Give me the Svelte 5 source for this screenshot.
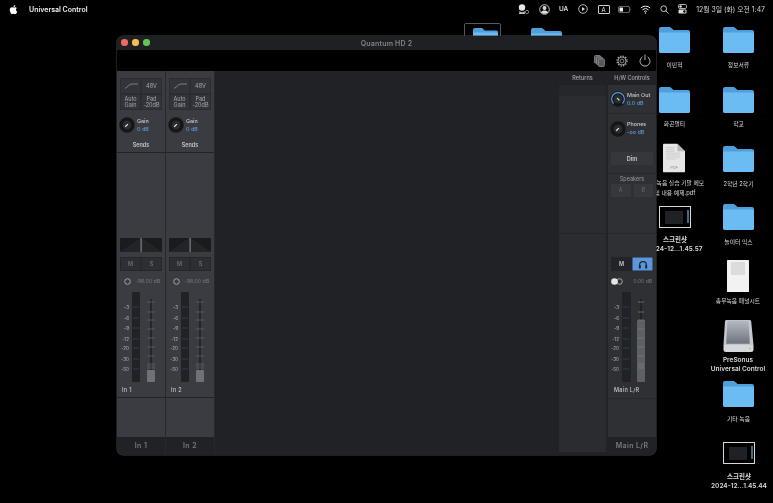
<script>
  const strips = [{ name: 'In 1' }, { name: 'In 2' }];
  const scale = [['-3', 15], ['-6', 26], ['-9', 36], ['-12', 47], ['-20', 56], ['-30', 67], ['-50', 77]];
  const ticks = [10, 20, 28, 37, 46, 55, 64, 72, 74, 76];

  const folders = [
    { x: 659, y: 27, label: '이민혁', ly: 60 },
    { x: 723, y: 27, label: '정보서류', ly: 60 },
    { x: 659, y: 87, label: '화곤멀티', ly: 119 },
    { x: 723, y: 87, label: '학교', ly: 119 },
    { x: 723, y: 146, label: '2학년 2학기', ly: 179 },
    { x: 723, y: 204, label: '놀이터 믹스', ly: 237 },
    { x: 723, y: 381, label: '기타 녹음', ly: 414 }
  ];
  const shots = [
    { x: 659, y: 206, cx: 675, lines: ['스크린샷', '2024-12...1.45.57'], ly: 236 },
    { x: 723, y: 442, cx: 739, lines: ['스크린샷', '2024-12...1.45.44'], ly: 473 }
  ];
</script>

{#snippet folder(w, h)}
  <svg width={w} height={h} viewBox="0 0 31 26">
    <path d="M2 0h8c1.5 0 2 .6 3 1.6L14.5 3H29a2 2 0 0 1 2 2v19a2 2 0 0 1-2 2H2a2 2 0 0 1-2-2V2a2 2 0 0 1 2-2z" fill="#4f9fdc" />
    <path d="M0 5.5h29a2 2 0 0 1 2 2V24a2 2 0 0 1-2 2H2a2 2 0 0 1-2-2z" fill="#6cbcf4" />
  </svg>
{/snippet}

{#snippet knob(blue)}
  <svg class="knob" width="16" height="16" viewBox="0 0 18 18">
    <circle cx="9" cy="9" r="8.7" fill="#161719" />
    <circle cx="9" cy="9" r="5.6" fill="#2b2c2f" stroke="#0e0e10" stroke-width="0.8" />
    {#if blue}
      <path d="M4 14.2A7.2 7.2 0 1 1 14 14.2" fill="none" stroke="#5a9be0" stroke-width="1.3" />
      <path d="M8 8l2.6 2.6" stroke="#e8e8e8" stroke-width="1.2" />
    {:else}
      <path d="M7 11l3-3" stroke="#e8e8e8" stroke-width="1.3" />
    {/if}
  </svg>
{/snippet}

{#snippet meter(capTop, wide)}
  <svg class="meter" width="48" height="90" viewBox="0 0 48 90">
    <rect x={wide ? 14 : 15} y="0" width={wide ? 9 : 8} height="90" rx="1" fill="#212225" />
    <path d="M{wide ? 33 : 34} 7v75" stroke="#1c1d20" stroke-width="1.4" />
    <rect x={wide ? 29 : 30} y={capTop} width="8" height={90 - capTop} rx="1" fill={wide ? '#5d6064' : '#6e7175'} />
    {#each ticks as t}
      <path d="M{wide ? 30 : 30} {t}h{wide ? 6 : 8}" stroke={wide ? '#7b7e82' : '#65686c'} stroke-width="0.7" />
    {/each}
    {#each scale as [label, y]}
      <text x={wide ? 11 : 12} y={y + 2} text-anchor="end">{label}</text>
      <path d="M{wide ? 15 : 16} {y}h6" stroke="#2c4a63" stroke-width="0.8" />
    {/each}
  </svg>
{/snippet}

<div class="desktop">
  <header class="menubar">
    <div class="menu-left">
      <svg width="11" height="11" viewBox="0 0 24 24" fill="#fff">
        <path d="M18.71 19.5c-.83 1.24-1.71 2.45-3.05 2.47-1.34.03-1.77-.79-3.29-.79-1.53 0-2 .77-3.27.82-1.31.05-2.3-1.32-3.14-2.53C4.25 17 2.94 12.45 4.7 9.39c.87-1.52 2.43-2.48 4.12-2.51 1.28-.02 2.5.87 3.29.87.78 0 2.26-1.07 3.81-.91.65.03 2.47.26 3.64 1.98-.09.06-2.17 1.28-2.15 3.81.03 3.02 2.65 4.03 2.68 4.04-.03.07-.42 1.44-1.38 2.83M13 3.5c.73-.83 1.94-1.46 2.94-1.5.13 1.17-.34 2.35-1.04 3.19-.69.85-1.83 1.51-2.95 1.42-.15-1.15.41-2.35 1.05-3.11z" />
      </svg>
      <span class="app-name">Universal Control</span>
    </div>
    <div class="status">
      <svg width="12" height="10" viewBox="0 0 12 10"><circle cx="4" cy="3.5" r="3.2" fill="#e8e8e8" /><path d="M1.5 7c1.5 1.6 3.5 1.6 5 0l.5 3H1z" fill="#bbb" /><circle cx="9" cy="8" r="1.7" fill="none" stroke="#999" stroke-width="0.8" /></svg>
      <svg width="11" height="11" viewBox="0 0 11 11"><circle cx="5.5" cy="5.5" r="4.8" fill="none" stroke="#ddd" stroke-width="0.9" /><circle cx="5.5" cy="4" r="1.9" fill="#ddd" /><path d="M2 8.5c1-2.6 6-2.6 7 0-2 1.8-5 1.8-7 0z" fill="#ddd" /></svg>
      <span class="st-text">UA</span>
      <svg width="10" height="10" viewBox="0 0 10 10"><circle cx="5" cy="5" r="4.3" fill="none" stroke="#ddd" stroke-width="0.8" /><path d="M4 3l3 2-3 2z" fill="#ddd" /></svg>
      <span class="input-box">A</span>
      <svg width="14" height="7" viewBox="0 0 14 7"><rect x="0.4" y="0.4" width="11.2" height="6.2" rx="1.6" fill="none" stroke="#8a8a8a" stroke-width="0.8" /><rect x="1.5" y="1.5" width="3.5" height="4" rx="0.6" fill="#eee" /><path d="M12.6 2.5v2c.7-.2.7-1.8 0-2z" fill="#8a8a8a" /></svg>
      <svg width="11" height="9" viewBox="0 0 11 9" fill="none" stroke="#eee"><path d="M.8 3a6.8 6.8 0 0 1 9.4 0" stroke-width="1" /><path d="M2.5 4.8a4.4 4.4 0 0 1 6 0" stroke-width="1" /><path d="M4.2 6.5a2 2 0 0 1 2.6 0" stroke-width="1" /><circle cx="5.5" cy="8" r=".7" fill="#eee" stroke="none" /></svg>
      <svg width="9" height="9" viewBox="0 0 9 9" fill="none" stroke="#ddd" stroke-width="0.9"><circle cx="3.7" cy="3.7" r="2.9" /><path d="M5.8 5.8L8.6 8.6" /></svg>
      <svg width="9" height="10" viewBox="0 0 9 10"><rect x="0.5" y="0.5" width="8" height="4" rx="1.2" fill="none" stroke="#ddd" stroke-width="0.8" /><circle cx="2.6" cy="2.5" r="1.2" fill="#ddd" /><rect x="0.5" y="5.5" width="8" height="4" rx="1.2" fill="#ddd" /><circle cx="6.4" cy="7.5" r="1.2" fill="#000" /></svg>
      <span class="clock">12월 3일 (화) 오전 1:47</span>
    </div>
  </header>

  <!-- icons half hidden behind the window -->
  <div class="peek selected" style="left:464px;top:23px"><div class="peek-folder">{@render folder(25, 21)}</div></div>
  <div class="peek" style="left:531px;top:28px">{@render folder(31, 26)}</div>

  {#each folders as f}
    <div class="icon" style="left:{f.x}px;top:{f.y}px">{@render folder(31, 26)}</div>
    <div class="label" style="left:{f.x + 15.5}px;top:{f.ly}px">{f.label}</div>
  {/each}

  {#each shots as s}
    <div class="shot" style="left:{s.x}px;top:{s.y}px">
      <div class="shot-inner">
        <span class="shot-win"></span>
        <span class="shot-dots"></span>
      </div>
    </div>
    <div class="label two latin" style="left:{s.cx}px;top:{s.ly}px">
      {#each s.lines as line}<div>{line}</div>{/each}
    </div>
  {/each}

  <div class="icon" style="left:663px;top:143px">
    <svg width="22" height="30" viewBox="0 0 23 30">
      <path d="M1 0h14l8 8v21a1 1 0 0 1-1 1H1a1 1 0 0 1-1-1V1a1 1 0 0 1 1-1z" fill="#e6e6e6" />
      <path d="M15 0l8 8h-7a1 1 0 0 1-1-1z" fill="#b9b9b9" />
      <path d="M3 4h9M3 6h9M3 8h9M3 10h15M3 12h15M3 14h15M3 16h11" stroke="#bcbcbc" stroke-width="0.6" />
      <text x="11.5" y="27" text-anchor="middle" class="pdf-tag">PDF</text>
    </svg>
  </div>
  <div class="label two" style="left:675px;top:178px">
    <div>총무녹음 실습 기말 메모</div>
    <div>및 내용 예제.pdf</div>
  </div>

  <div class="icon" style="left:727px;top:260px">
    <svg width="22" height="32" viewBox="0 0 22 32">
      <rect width="22" height="32" rx="0.6" fill="#f2f2f2" />
      <rect x="4" y="2" width="14" height="13" fill="#dcdcdc" />
    </svg>
  </div>
  <div class="label" style="left:738px;top:296px">총무녹음 패널시트</div>

  <div class="icon" style="left:723px;top:320px">
    <svg width="31" height="32" viewBox="0 0 31 32">
      <defs>
        <linearGradient id="drive" x1="0" y1="0" x2="0" y2="1">
          <stop offset="0" stop-color="#b4bac1" />
          <stop offset="1" stop-color="#6d747d" />
        </linearGradient>
      </defs>
      <path d="M3.5 0h23c1 0 1.6.6 1.7 1.6L30.5 25H.5L2 1.6C2.1.6 2.6 0 3.5 0z" fill="#c3c8cd" />
      <path d="M4.5 .8h21l1.3 23H3.2z" fill="url(#drive)" />
      <path d="M.5 25h30v4.5a2.5 2.5 0 0 1-2.5 2.5H3a2.5 2.5 0 0 1-2.5-2.5z" fill="#d5d9dc" />
      <circle cx="27" cy="28.5" r="0.8" fill="#7fd06a" />
    </svg>
  </div>
  <div class="label two latin" style="left:738px;top:356px">
    <div>PreSonus</div>
    <div>Universal Control</div>
  </div>

  <main class="window">
    <div class="titlebar">
      <div class="lights"><i class="red"></i><i class="yellow"></i><i class="green"></i></div>
      <span class="title">Quantum HD 2</span>
    </div>
    <div class="toolbar">
      <svg width="11" height="12" viewBox="0 0 11 12" fill="#55585c" stroke="#9a9a9a" stroke-width="0.7"><rect x="0.5" y="0.5" width="6" height="7.5" rx="1" /><rect x="2.4" y="2" width="6" height="7.5" rx="1" /><rect x="4.4" y="3.8" width="6" height="7.7" rx="1" /></svg>
      <svg width="12" height="12" viewBox="0 0 12 12" fill="none" stroke="#a5a5a5"><circle cx="6" cy="6" r="1.9" stroke-width="0.8" /><circle cx="6" cy="6" r="4" stroke-width="0.9" /><circle cx="6" cy="6" r="5" stroke-width="1.3" stroke-dasharray="1.35 1.27" /></svg>
      <svg width="12" height="13" viewBox="0 0 12 13" fill="none" stroke="#c8c8c8" stroke-width="0.9"><path d="M3.4 2.9a5 5 0 1 0 5.2 0" /><path d="M6 .5v5.6" /></svg>
    </div>

    <div class="mixer">
      {#each strips as s}
        <section class="strip">
          <div class="top">
            <div class="cells">
              <div class="cell"><svg width="14" height="6" viewBox="0 0 14 6" fill="none" stroke="#8f9296" stroke-width="0.8"><path d="M1 5.5C4 4 5 1 8 1h6" /></svg></div>
              <div class="cell">48V</div>
              <div class="cell">Auto<br />Gain</div>
              <div class="cell">Pad<br />-20dB</div>
            </div>
            <div class="gain">
              {@render knob(false)}
              <div class="gain-text"><span>Gain</span><span class="val">0 dB</span></div>
            </div>
            <div class="sends">Sends</div>
          </div>

          <div class="fader-part">
            <svg class="pan" width="42" height="14" viewBox="0 0 42 14">
              <rect width="42" height="14" rx="1" fill="#1a1b1d" />
              <path d="M0 14L20 0v14zM42 14L22 0v14z" fill="#232427" />
              <rect x="20.5" width="1.2" height="14" fill="#85888b" />
            </svg>
            <div class="ms">
              <span>M</span><span>S</span>
            </div>
            <div class="level">
              <svg width="7" height="7" viewBox="0 0 7 7"><circle cx="3.5" cy="3.5" r="2.8" fill="none" stroke="#b9bbbd" stroke-width="0.8" /></svg>
              <span>-96.00 dB</span>
            </div>
            {@render meter(78, false)}
            <div class="strip-name">{s.name}</div>
          </div>

          <div class="spare"></div>
          <div class="band">{s.name}</div>
        </section>
      {/each}

      <div class="empty"></div>

      <section class="returns">
        <div class="col-head">Returns</div>
        <div class="ret-top"></div>
        <div class="ret-mid"></div>
        <div class="ret-low"></div>
      </section>

      <section class="hw">
        <div class="col-head">H/W Controls</div>
        <div class="hw-knob">
          {@render knob(true)}
          <div class="gain-text"><span>Main Out</span><span class="val">0.0 dB</span></div>
        </div>
        <div class="hw-knob second">
          {@render knob(false)}
          <div class="gain-text"><span>Phones</span><span class="val">-oo dB</span></div>
        </div>
        <div class="dim-part"><button class="dim">Dim</button></div>
        <div class="speakers">
          <div class="sp-title">Speakers</div>
          <div class="sp-row"><span>A</span><span>B</span></div>
        </div>
        <div class="hw-fader">
          <div class="mh">
            <span>M</span>
            <span class="phones">
              <svg width="10" height="9" viewBox="0 0 10 9" fill="none"><path d="M1.6 7V5a3.4 3.4 0 0 1 6.8 0v2" stroke="#232427" stroke-width="1.2" /><rect x="0.8" y="5" width="2" height="3.6" rx="0.7" fill="#232427" /><rect x="7.2" y="5" width="2" height="3.6" rx="0.7" fill="#232427" /></svg>
            </span>
          </div>
          <div class="level main">
            <svg width="12" height="7" viewBox="0 0 12 7"><circle cx="8.5" cy="3.5" r="2.8" fill="none" stroke="#c5c7c9" stroke-width="0.8" /><circle cx="3.5" cy="3.5" r="3.3" fill="#e6e6e6" /></svg>
            <span>0.00 dB</span>
          </div>
          {@render meter(28, true)}
          <div class="strip-name">Main L/R</div>
        </div>
        <div class="spare"></div>
        <div class="band">Main L/R</div>
      </section>
    </div>
  </main>
</div>

<style>
  :global(body) {
    margin: 0;
    background: #000;
  }

  .desktop {
    position: relative;
    width: 773px;
    height: 503px;
    overflow: hidden;
    background: #000;
    color: #e4e4e4;
    font-family: Inter, "Noto Sans CJK KR", "Liberation Sans", sans-serif;
    font-size: 6px;
    /* the reference is a downscaled capture, everything is a little soft */
    filter: blur(0.3px);
  }

  .menubar {
    display: flex;
    justify-content: space-between;
    align-items: center;
    height: 18px;
    padding-right: 8px;
  }

  .menu-left {
    display: flex;
    align-items: center;
    gap: 10px;
    padding-left: 8px;
  }

  .app-name {
    font-size: 7px;
    font-weight: 600;
    color: #f0f0f0;
  }

  .status {
    display: grid;
    grid-template-columns: 20px 20px 19px 20px 21px 21px 20px 18px 18px auto;
    justify-items: center;
    align-items: center;
  }

  .st-text {
    font-size: 6.5px;
    font-weight: 600;
    color: #ddd;
  }

  .input-box {
    display: block;
    box-sizing: border-box;
    width: 12px;
    height: 9px;
    line-height: 7.5px;
    border: 0.8px solid #ccc;
    border-radius: 1px;
    text-align: center;
    font-size: 6px;
  }

  .clock {
    padding-left: 5px;
    font-size: 6.9px;
    color: #d8d8d8;
    white-space: nowrap;
  }

  .icon, .peek, .shot {
    position: absolute;
  }

  .icon svg, .peek svg {
    display: block;
  }

  .selected {
    box-sizing: border-box;
    width: 37px;
    height: 20px;
    border: 1px solid #55575a;
    border-radius: 2px;
  }

  .peek-folder {
    margin: 4px 0 0 8px;
  }

  .label {
    position: absolute;
    transform: translateX(-50%);
    font-size: 5.8px;
    line-height: 10px;
    color: #dcdcdc;
    text-align: center;
    white-space: nowrap;
  }

  .label.two {
    line-height: 9.5px;
  }

  .label.latin {
    font-size: 6.5px;
    line-height: 8.8px;
    font-weight: 600;
  }

  .pdf-tag {
    font-size: 4px;
    fill: #8d8d8d;
    font-family: "Liberation Sans", sans-serif;
  }

  .shot {
    box-sizing: border-box;
    width: 32px;
    height: 22px;
    border: 1px solid #d8d8d8;
    background: #000;
  }

  .shot-inner {
    display: flex;
    justify-content: space-between;
    padding: 3px 1px 0 5px;
  }

  .shot-win {
    width: 18px;
    height: 13px;
    margin-top: 1px;
    background: #202124;
  }

  .shot-dots {
    width: 2px;
    height: 13px;
    background: #3f6c8d;
  }

  .window {
    position: absolute;
    left: 117px;
    top: 36px;
    display: flex;
    flex-direction: column;
    box-sizing: border-box;
    width: 539px;
    height: 419px;
    overflow: hidden;
    border-radius: 6px;
    background: #212226;
    box-shadow: 0 0 0 0.5px #3d3e41;
  }

  .titlebar {
    position: relative;
    display: flex;
    justify-content: center;
    align-items: center;
    flex: 0 0 14px;
    background: #1f2023;
  }

  .lights {
    position: absolute;
    left: 4px;
    top: 3px;
    display: flex;
    gap: 4.5px;
  }

  .lights i {
    width: 6.5px;
    height: 6.5px;
    border-radius: 50%;
  }

  .red { background: #ed6a5f; }
  .yellow { background: #f5bf4f; }
  .green { background: #61c554; }

  .title {
    font-size: 7px;
    font-weight: 600;
    letter-spacing: 0.2px;
    color: #828385;
  }

  .toolbar {
    display: flex;
    justify-content: flex-end;
    align-items: center;
    gap: 11px;
    flex: 0 0 21px;
    padding-right: 5px;
    background: #000;
  }

  .mixer {
    display: flex;
    flex: 1;
    min-height: 0;
  }

  .strip {
    display: flex;
    flex-direction: column;
    flex: 0 0 48px;
    box-sizing: border-box;
    border-right: 1px solid #27282b;
    background: #3a3c41;
  }

  .top {
    display: flex;
    flex-direction: column;
    flex: 0 0 82px;
    box-sizing: border-box;
    padding: 7px 3px 0;
    border-bottom: 1px solid #222326;
  }

  .cells {
    display: grid;
    grid-template-columns: 21px 21px;
    grid-template-rows: 16px 16px;
    gap: 0;
    box-sizing: border-box;
    border-radius: 1px;
    background: #32343a;
  }

  .cell {
    display: flex;
    align-items: center;
    justify-content: center;
    box-shadow: inset 0 0 0 0.5px #26272a;
    font-size: 5.5px;
    line-height: 6px;
    text-align: center;
    color: #a5a7aa;
  }

  .gain {
    display: flex;
    align-items: center;
    gap: 2px;
    margin: 7px 0 0 -1px;
  }

  .knob {
    display: block;
    flex: none;
  }

  .gain-text {
    display: flex;
    flex-direction: column;
    gap: 1.5px;
    font-size: 5.4px;
    line-height: 6.5px;
    font-weight: 500;
    color: #c9cacc;
    white-space: nowrap;
  }

  .val {
    color: #5a9be0;
  }

  .sends {
    margin-top: 9px;
    text-align: center;
    font-size: 5.5px;
    font-weight: 600;
    color: #c4c5c7;
  }

  .fader-part {
    display: flex;
    flex-direction: column;
    flex: 0 0 245px;
    box-sizing: border-box;
    padding-top: 85px;
    border-bottom: 1px solid #222326;
  }

  .pan {
    display: block;
    margin-left: 3px;
  }

  .ms, .mh {
    display: grid;
    grid-template-columns: 1fr 1fr;
    height: 14px;
    margin: 5px 3px 0;
    border-radius: 1px;
    background: #2e2f33;
    box-shadow: inset 0 0 0 0.5px #242528;
    font-size: 5.5px;
    font-weight: 600;
    color: #6b6d70;
  }

  .ms span, .mh span {
    display: flex;
    align-items: center;
    justify-content: center;
    box-shadow: inset 0 0 0 0.5px #242528;
  }

  .level {
    display: flex;
    align-items: center;
    gap: 5px;
    height: 10px;
    margin-top: 5px;
    padding-left: 6.5px;
    font-size: 5.2px;
    color: #76787b;
    white-space: nowrap;
  }

  .meter {
    display: block;
    margin-top: 6px;
  }

  .meter text {
    font-size: 4.6px;
    fill: #b5b6b8;
  }

  .strip-name {
    margin-top: 5px;
    padding-left: 5px;
    font-size: 5.5px;
    font-weight: 500;
    letter-spacing: 0.3px;
    color: #c7c8ca;
  }

  .spare {
    flex: 1;
  }

  .band {
    flex: 0 0 18px;
    line-height: 18px;
    text-align: center;
    background: #212226;
    font-size: 7px;
    font-weight: 600;
    letter-spacing: 0.4px;
    color: #77797c;
  }

  .empty {
    flex: 1;
  }

  .returns {
    display: flex;
    flex-direction: column;
    flex: 0 0 48px;
    padding-bottom: 3px;
    box-sizing: border-box;
    border-right: 1px solid #202124;
  }

  .col-head {
    flex: 0 0 14px;
    line-height: 14px;
    text-align: center;
    font-size: 5.5px;
    font-weight: 500;
    color: #a8a9ab;
    white-space: nowrap;
    background: #212226;
  }

  .ret-top {
    flex: 0 0 11px;
    background: #26272b;
  }

  .ret-mid {
    flex: 0 0 137px;
    background: #2b2c30;
    border-bottom: 1px solid #232427;
  }

  .ret-low {
    flex: 1;
    background: #2b2c30;
  }

  .hw {
    display: flex;
    flex-direction: column;
    flex: 0 0 49px;
    background: #2f3034;
    border-left: 1px solid #232427;
    box-sizing: border-box;
  }

  .hw-knob {
    display: flex;
    align-items: center;
    gap: 1px;
    flex: 0 0 29px;
    box-sizing: border-box;
    padding: 0 0 0 2px;
    border-bottom: 1px solid #27282b;
  }

  .hw-knob.second {
    border-bottom: 0;
  }

  .dim-part {
    flex: 0 0 31px;
    box-sizing: border-box;
    padding: 9px 3px 0 3px;
    border-bottom: 1px solid #27282b;
  }

  .dim {
    display: block;
    width: 100%;
    height: 13px;
    padding: 0;
    border: 0;
    border-radius: 1px;
    background: #36373b;
    font: 600 5.5px Inter, sans-serif;
    color: #d0d0d0;
  }

  .speakers {
    flex: 0 0 60px;
    box-sizing: border-box;
    padding: 1px 3px 0;
    border-bottom: 1px solid #27282b;
  }

  .sp-title {
    text-align: center;
    font-size: 5.5px;
    line-height: 8px;
    color: #96989a;
  }

  .sp-row {
    display: grid;
    grid-template-columns: 1fr 1fr;
    gap: 3px;
    margin-top: 1px;
  }

  .sp-row span {
    height: 13px;
    line-height: 13px;
    text-align: center;
    border-radius: 1px;
    background: #37383c;
    color: #66686b;
    font-size: 5.5px;
  }

  .hw-fader {
    display: flex;
    flex-direction: column;
    flex: 0 0 165px;
    box-sizing: border-box;
    padding-top: 23px;
    border-bottom: 1px solid #27282b;
  }

  .mh {
    margin: 0 3px;
    background: #232427;
    color: #c8c9ca;
  }

  .phones {
    background: #5a97dc;
  }

  .level.main {
    justify-content: space-between;
    padding: 0 4px 0 3px;
    font-size: 5px;
  }

  .hw .strip-name {
    padding-left: 6px;
  }
</style>
